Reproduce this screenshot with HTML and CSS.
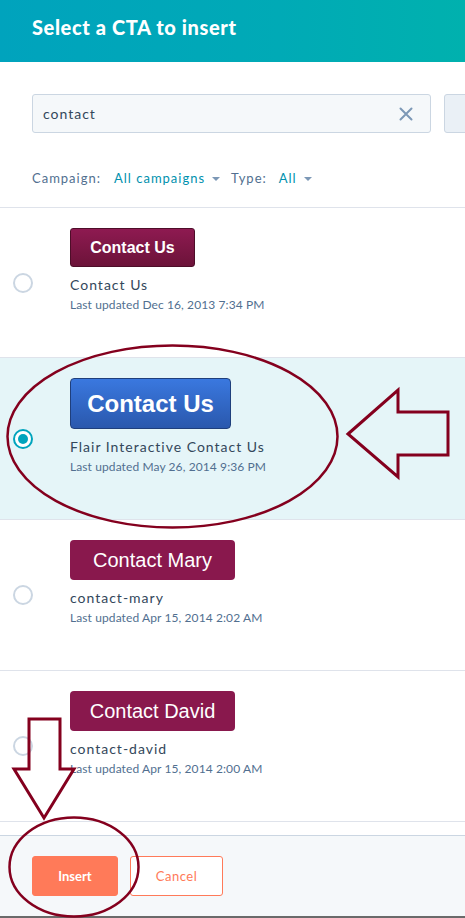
FILE: index.html
```html
<!DOCTYPE html>
<html>
<head>
<meta charset="utf-8">
<link rel="stylesheet" href="styles.css">
</head>
<body>
<div class="panel">
  <header class="header">
    <h1 class="title">Select a CTA to insert</h1>
  </header>
  <div class="filters">
    <div class="search-row">
      <div class="search">
        <span class="search-text">contact</span>
        <svg class="clear" width="14" height="14" viewBox="0 0 14 14"><path d="M1.5 1.5 L12.5 12.5 M12.5 1.5 L1.5 12.5" stroke="#7c98b6" stroke-width="2" stroke-linecap="round"/></svg>
      </div>
      <div class="side-btn"></div>
    </div>
    <div class="filter-row">
      <span class="flabel">Campaign:</span>
      <span class="fvalue">All campaigns</span><span class="caret"></span>
      <span class="flabel type">Type:</span>
      <span class="fvalue">All</span><span class="caret"></span>
    </div>
  </div>
  <div class="list">
    <div class="row">
      <span class="radio"></span>
      <div class="info">
        <span class="cta cta-maroon">Contact Us</span>
        <div class="name">Contact Us</div>
        <div class="date">Last updated Dec 16, 2013 7:34 PM</div>
      </div>
    </div>
    <div class="row selected">
      <span class="radio on"></span>
      <div class="info">
        <span class="cta cta-blue">Contact Us</span>
        <div class="name">Flair Interactive Contact Us</div>
        <div class="date">Last updated May 26, 2014 9:36 PM</div>
      </div>
    </div>
    <div class="row">
      <span class="radio"></span>
      <div class="info">
        <span class="cta cta-flat">Contact Mary</span>
        <div class="name">contact-mary</div>
        <div class="date">Last updated Apr 15, 2014 2:02 AM</div>
      </div>
    </div>
    <div class="row">
      <span class="radio"></span>
      <div class="info">
        <span class="cta cta-flat">Contact David</span>
        <div class="name">contact-david</div>
        <div class="date">Last updated Apr 15, 2014 2:00 AM</div>
      </div>
    </div>
    <div class="spacer"></div>
  </div>
  <footer class="footer">
    <button class="btn btn-primary">Insert</button>
    <button class="btn btn-secondary">Cancel</button>
  </footer>
</div>
<svg class="annotations" width="465" height="918" viewBox="0 0 465 918">
  <g fill="none" stroke="#84001e" stroke-width="2.5">
    <ellipse cx="172.5" cy="436.5" rx="165" ry="91"/>
    <polygon points="348,434 398,390 398,412 448,412 448,455 398,455 398,477" stroke-width="3"/>
    <polygon points="29,719 60,719 60,769 74,769 44,818 14,769 29,769" stroke-width="3"/>
    <ellipse cx="74" cy="867" rx="64.5" ry="49.5"/>
  </g>
</svg>
</body>
</html>
```
FILE: styles.css
```css
* { box-sizing: border-box; }
html, body { margin: 0; padding: 0; }
body {
  width: 465px;
  height: 918px;
  overflow: hidden;
  position: relative;
  background: #fff;
  font-family: Lato, "Open Sans", sans-serif;
  color: #33475b;
}
.panel {
  display: flex;
  flex-direction: column;
  height: 918px;
}
.header {
  height: 62px;
  flex: none;
  background: linear-gradient(90deg, #00a3bd 0%, #00aab6 60%, #00b1ae 100%);
  padding: 14px 0 0 32px;
}
.title {
  margin: 0;
  font-size: 20px;
  line-height: 26px;
  font-weight: 900;
  color: #fff;
  letter-spacing: 0.6px;
}
.filters {
  flex: none;
  padding: 32px 0 0 32px;
  height: 146px;
  border-bottom: 1px solid #dfe3eb;
  overflow: hidden;
}
.search-row {
  display: flex;
  gap: 13px;
  width: 600px;
}
.search {
  width: 399px;
  height: 39px;
  flex: none;
  background: #f5f8fa;
  border: 1px solid #cbd6e2;
  border-radius: 3px;
  display: flex;
  align-items: center;
  justify-content: space-between;
  padding: 0 17px 0 10px;
}
.search-text {
  font-size: 14px;
  letter-spacing: 1px;
  color: #33475b;
}
.side-btn {
  width: 100px;
  height: 39px;
  flex: none;
  background: #eaf0f6;
  border: 1px solid #cbd6e2;
  border-radius: 3px;
}
.filter-row {
  display: flex;
  align-items: center;
  margin-top: 36px;
  font-size: 13px;
  line-height: 18px;
  letter-spacing: 1px;
}
.flabel { color: #516f90; margin-right: 13px; }
.flabel.type { margin-right: 12px; }
.fvalue { color: #0091ae; }
.caret {
  width: 0; height: 0;
  border-left: 4px solid transparent;
  border-right: 4px solid transparent;
  border-top: 4px solid #7c98b6;
  margin: 2px 11px 0 7px;
}
.list {
  flex: 1;
  display: flex;
  flex-direction: column;
}
.row {
  display: flex;
  align-items: center;
  border-bottom: 1px solid #dfe3eb;
  padding: 20px 0 44px 13px;
  flex: none;
}
.row.selected { background: #e5f5f8; }
.radio {
  width: 20px;
  height: 20px;
  border: 2px solid #cbd6e2;
  border-radius: 50%;
  background: #fff;
  flex: none;
  margin-right: 37px;
  position: relative;
  top: 12px;
}
.radio.on {
  border-color: #00a4bd;
  display: flex;
  align-items: center;
  justify-content: center;
}
.radio.on::after {
  content: "";
  width: 10px;
  height: 10px;
  border-radius: 50%;
  background: #00a4bd;
}
.info {
  display: flex;
  flex-direction: column;
  align-items: flex-start;
}
.cta {
  font-family: "Liberation Sans", Arial, sans-serif;
  color: #fff;
  display: flex;
  align-items: center;
  justify-content: center;
}
.cta-maroon {
  width: 125px;
  height: 39px;
  font-size: 16px;
  font-weight: bold;
  background: linear-gradient(180deg, #8e1a51 0%, #6c1339 100%);
  border: 1px solid #4e0d29;
  border-radius: 3px;
}
.cta-blue {
  width: 161px;
  height: 51px;
  font-size: 24px;
  font-weight: bold;
  background: linear-gradient(180deg, #3a78df 0%, #2a58ad 100%);
  border: 1px solid #1f3f7c;
  border-radius: 4px;
}
.cta-flat {
  width: 165px;
  height: 40px;
  font-size: 20px;
  background: #89184d;
  border-radius: 4px;
}
.name {
  margin-top: 8px;
  font-size: 14px;
  line-height: 20px;
  letter-spacing: 1px;
  color: #33475b;
}
.date {
  margin-top: 2px;
  font-size: 12px;
  line-height: 16px;
  letter-spacing: 0.1px;
  color: #516f90;
}
.spacer { flex: 1; }
.footer {
  flex: none;
  height: 83px;
  background: #f5f8fa;
  border-top: 1px solid #cbd6e2;
  border-bottom: 2px solid #6a6a6a;
  display: flex;
  align-items: flex-start;
  gap: 12px;
  padding: 20px 0 0 32px;
}
.btn {
  height: 40px;
  border-radius: 3px;
  font-family: Lato, "Open Sans", sans-serif;
  font-size: 13px;
  padding: 0;
  cursor: pointer;
}
.btn-primary {
  width: 86px;
  background: #ff7a59;
  border: 1px solid #ff7a59;
  color: #fff;
  font-weight: 700;
}
.btn-secondary {
  width: 93px;
  background: #fff;
  border: 1px solid #ff7a59;
  color: #ff7a59;
  letter-spacing: 0.5px;
}
.annotations {
  position: absolute;
  left: 0;
  top: 0;
  pointer-events: none;
}
```
